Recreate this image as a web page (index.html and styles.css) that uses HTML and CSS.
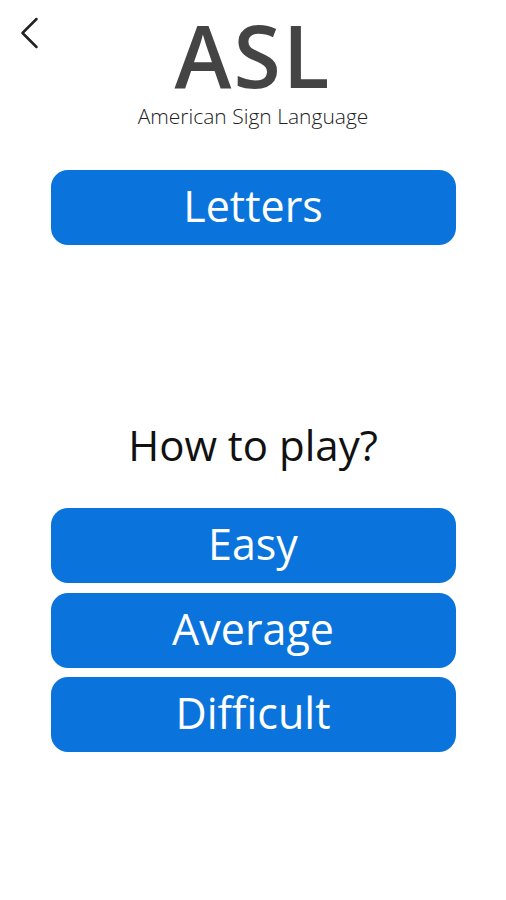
FILE: index.html
```html
<!DOCTYPE html>
<html lang="en">
<head>
<meta charset="utf-8">
<title>ASL</title>
<link rel="stylesheet" href="styles.css">
</head>
<body>
<div class="screen">
  <div class="header">
    <a class="back" href="#">
      <svg width="20" height="32" viewBox="0 0 20 32"><path d="M17.5 2 L3.5 16 L17.5 30" fill="none" stroke="#222" stroke-width="2.5" stroke-linecap="round" stroke-linejoin="round"/></svg>
    </a>
    <div class="brand">
      <div class="logo">ASL</div>
      <div class="sub">American Sign Language</div>
    </div>
    <div></div>
  </div>

  <a class="btn letters" href="#">Letters</a>

  <div class="question">How to play?</div>

  <div class="levels">
    <a class="btn" href="#">Easy</a>
    <a class="btn" href="#">Average</a>
    <a class="btn" href="#">Difficult</a>
  </div>
</div>
</body>
</html>
```

FILE: styles.css
```css
/* reset */
*{
margin:0;
padding:0;
box-sizing:border-box;
}
body{
background:#fff;
font-family:"Open Sans","Noto Sans",sans-serif;
}
.screen{
width:506px;
min-height:900px;
}
/* header: back arrow + title */
.header{
display:grid;
grid-template-columns:1fr auto 1fr;
}
.back{
display:block;
padding:17px 0 0 19px;
align-self:start;
}
.back svg{
display:block;
}
.brand{
text-align:center;
padding-top:12px;
}
.logo{
font-size:86px;
line-height:1;
font-weight:600;
color:#444;
letter-spacing:2px;
}
.sub{
margin-top:8px;
font-size:21px;
line-height:1;
font-weight:300;
color:#222;
}
/* blue buttons */
.btn{
display:flex;
align-items:center;
justify-content:center;
width:405px;
height:75px;
margin:0 auto;
padding-bottom:4px;
background:#0a74dc;
border-radius:17px;
color:#fff;
font-size:43px;
line-height:1;
text-decoration:none;
}
.letters{
margin-top:43px;
}
.question{
margin-top:179px;
text-align:center;
font-size:42px;
line-height:1;
color:#111;
}
.levels{
margin-top:42px;
display:flex;
flex-direction:column;
gap:9.5px;
}
```
